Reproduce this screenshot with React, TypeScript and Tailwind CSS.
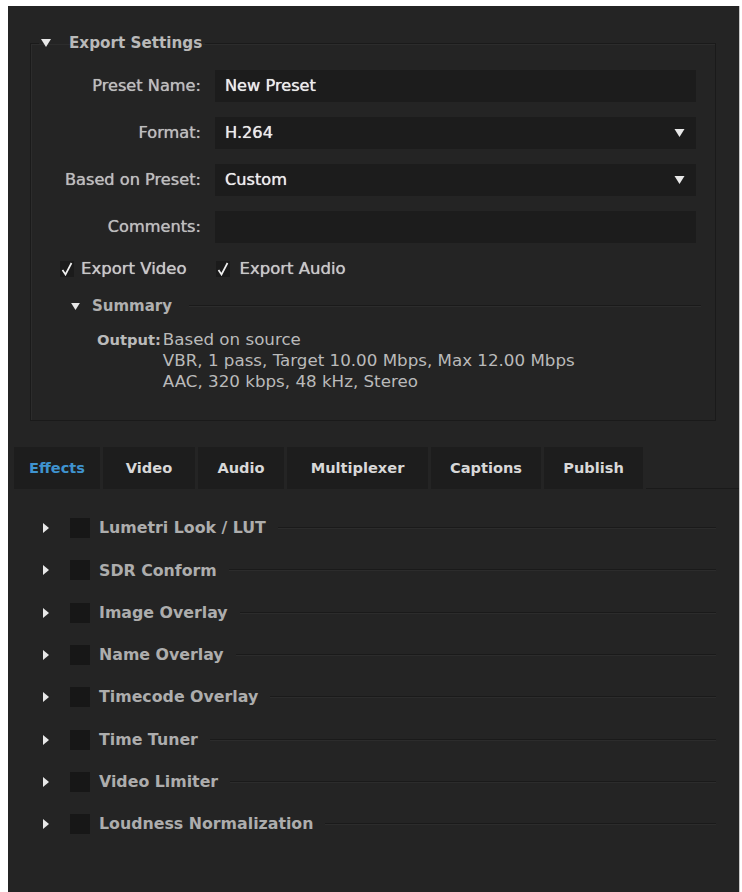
import React from 'react'

function DownTri({ className }: { className?: string }) {
  return (
    <svg viewBox="0 0 10 8" className={className} fill="currentColor">
      <path d="M0 0h10L5 8z" />
    </svg>
  )
}

function RightTri({ className }: { className?: string }) {
  return (
    <svg viewBox="0 0 6 10" className={className} fill="currentColor">
      <path d="M0 0l6 5-6 5z" />
    </svg>
  )
}

function Check({ className }: { className?: string }) {
  return (
    <span className={'flex h-[16px] w-[14px] items-center justify-center bg-[#1b1b1b] ' + (className ?? '')}>
      <svg viewBox="0 0 12 14" className="h-[14px] w-[12px] text-[#f0f0f0]" fill="none" stroke="currentColor" strokeWidth={1.7}>
        <path d="M1.5 8l3 4.5L10.5 1" />
      </svg>
    </span>
  )
}

const fields = [
  { label: 'Preset Name:', value: 'New Preset', dropdown: false },
  { label: 'Format:', value: 'H.264', dropdown: true },
  { label: 'Based on Preset:', value: 'Custom', dropdown: true },
  { label: 'Comments:', value: '', dropdown: false },
]

const tabs = [
  { name: 'Effects', w: 'w-[86px]', active: true },
  { name: 'Video', w: 'w-[92px]' },
  { name: 'Audio', w: 'w-[86px]' },
  { name: 'Multiplexer', w: 'w-[141px]' },
  { name: 'Captions', w: 'w-[110px]' },
  { name: 'Publish', w: 'w-[99px]' },
]

const effects = [
  'Lumetri Look / LUT',
  'SDR Conform',
  'Image Overlay',
  'Name Overlay',
  'Timecode Overlay',
  'Time Tuner',
  'Video Limiter',
  'Loudness Normalization',
]

function ExportSettings() {
  return (
    <fieldset className="ml-[22px] h-[389px] w-[686px] border border-[#1a1a1a] shadow-[inset_1px_1px_0_#2c2c2c]">
      <legend className="ml-[8px] flex h-[22px] items-center gap-[18px] px-[2px] pr-[3px] text-[15.2px] font-bold text-[#b9b9b9]">
        <DownTri className="h-[8px] w-[10px] text-[#e8e8e8]" />
        <span>Export Settings</span>
      </legend>

      <div className="flex flex-col gap-[15px] pt-[16px]">
        {fields.map((f) => (
          <div key={f.label} className="flex h-[32px] items-center">
            <div className="w-[170px] text-right text-[16.2px] text-[#bdbdbd] [text-shadow:0_0_0.7px_#bdbdbd]">
              {f.label}
            </div>
            <div className="ml-[14px] flex h-full w-[481px] items-center justify-between bg-[#1c1c1c] pl-[10px] pr-[11px]">
              <span className="text-[16.2px] text-[#ececec] [text-shadow:0_0_0.7px_#ececec]">{f.value}</span>
              {f.dropdown && <DownTri className="h-[8px] w-[11px] text-[#e8e8e8]" />}
            </div>
          </div>
        ))}
      </div>

      {/* Export checkboxes */}
      <div className="mt-[15px] flex h-[22px] items-center pl-[29px] text-[16.5px] text-[#c8c8c8] [text-shadow:0_0_0.7px_#c8c8c8]">
        <Check />
        <span className="ml-[7px]">Export Video</span>
        <Check className="ml-[29px]" />
        <span className="ml-[10px]">Export Audio</span>
      </div>

      {/* Summary */}
      <div className="mt-[15px] flex h-[22px] items-center pl-[40px] pr-[14px]">
        <DownTri className="h-[7px] w-[9px] text-[#e8e8e8]" />
        <span className="ml-[12px] text-[15px] font-bold text-[#b0b0b0]">Summary</span>
        <div className="ml-[17px] h-[2px] flex-1 border-t border-[#1a1a1a] border-b-[#2c2c2c] border-b" />
      </div>

      <div className="mt-[12px] grid grid-cols-[auto_1fr] pl-[66px] text-[16.7px] leading-[21px] text-[#bababa]">
        <span className="text-[14.7px] font-bold">Output:</span>
        <div className="pl-[2px]">
          <div>Based on source</div>
          <div>VBR, 1 pass, Target 10.00 Mbps, Max 12.00 Mbps</div>
          <div>AAC, 320 kbps, 48 kHz, Stereo</div>
        </div>
      </div>
    </fieldset>
  )
}

function Tabs() {
  return (
    <div className="mt-[26px] flex h-[42px] pl-[6px]">
      {tabs.map((t) => (
        <div
          key={t.name}
          className={
            'mr-[3px] flex h-full items-center justify-center bg-[#1d1d1d] text-[14.6px] font-bold ' +
            t.w +
            (t.active ? ' text-[#3f93cf]' : ' text-[#d8d8d8]')
          }
        >
          {t.name}
        </div>
      ))}
      <div className="flex-1 border-b border-[#1a1a1a]" />
    </div>
  )
}

function EffectsList() {
  return (
    <div className="mt-[18px] flex flex-col pl-[35px] pr-[23px]">
      {effects.map((name) => (
        <div key={name} className="flex h-[42.3px] items-center">
          <RightTri className="h-[10px] w-[6px] text-[#e8e8e8]" />
          <div className="ml-[21px] h-[20px] w-[20px] bg-[#171717]" />
          <span className="ml-[9px] text-[15.8px] font-bold text-[#adadad]">{name}</span>
          <div className="ml-[12px] h-[2px] flex-1 border-t border-[#1a1a1a] border-b-[#2c2c2c] border-b" />
        </div>
      ))}
    </div>
  )
}

export default function App() {
  return (
    <div className="min-h-[892px] bg-white pl-[8px] pr-[2px] pt-[6px] font-['DejaVu_Sans',sans-serif]">
      <div className="h-[886px] overflow-hidden border-r border-[#c8c8c8] bg-[#242424] pt-[26px]">
        <ExportSettings />
        <Tabs />
        <EffectsList />
      </div>
    </div>
  )
}
